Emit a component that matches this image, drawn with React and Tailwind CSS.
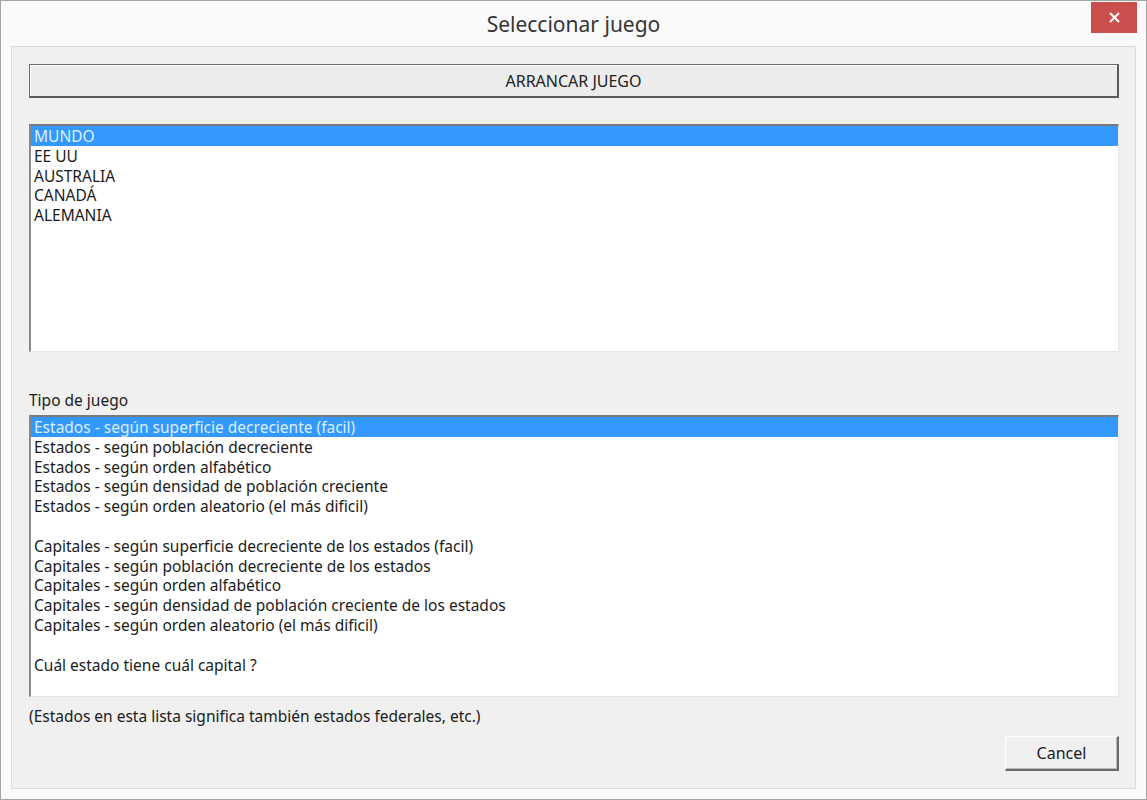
import React from "react";

const countries = ["MUNDO", "EE UU", "AUSTRALIA", "CANADÁ", "ALEMANIA"];
const types = [
  "Estados - según superficie decreciente (facil)",
  "Estados - según población decreciente",
  "Estados - según orden alfabético",
  "Estados - según densidad de población creciente",
  "Estados - según orden aleatorio (el más dificil)",
  "",
  "Capitales - según superficie decreciente de los estados (facil)",
  "Capitales - según población decreciente de los estados",
  "Capitales - según orden alfabético",
  "Capitales - según densidad de población creciente de los estados",
  "Capitales - según orden aleatorio (el más dificil)",
  "",
  "Cuál estado tiene cuál capital ?",
];

function ListBox({ items, height }) {
  return (
    <div
      className={`bg-white border-t-2 border-l-2 border-b border-r border-t-[#7a7a7a] border-l-[#8a8a8a] border-b-[#e6e6e6] border-r-[#e6e6e6] ${height}`}
    >
      {items.map((t, i) => (
        <div
          key={i}
          className={`h-[19.8px] leading-[21.8px] pl-[3px] text-[15.5px] whitespace-pre ${
            i === 0 ? "bg-[#3399ff] text-[#dcefff]" : "text-[#1b1b1b]"
          }`}
        >
          {t || " "}
        </div>
      ))}
    </div>
  );
}

export default function App() {
  return (
    <div
      className="w-[1147px] h-[800px] border border-[#a4a4a4] bg-[#fafafa] flex flex-col"
      style={{ fontFamily: '"Noto Sans", "Liberation Sans", sans-serif' }}
    >
      <div className="relative h-[45px] shrink-0 flex items-center justify-center">
        <span className="text-[21px] text-[#353535] mt-[2px]">Seleccionar juego</span>
        <div className="absolute right-[9px] top-[1px] w-[46px] h-[31px] bg-[#c9504c] flex items-center justify-center">
          <svg width="11" height="11" viewBox="0 0 11 11">
            <path d="M1 1 L10 10 M10 1 L1 10" stroke="#fff" strokeWidth="2" />
          </svg>
        </div>
      </div>
      <div className="mx-[10px] mb-[10px] flex-1 border border-[#dadada] bg-[#f0f0f0] pl-[17px] pr-[16px] pt-[17px] flex flex-col">
        <button className="h-[34px] w-full border border-[#6c6c6c] border-b-2 border-r-2 border-b-[#5a5a5a] border-r-[#5a5a5a] bg-[#ececec] text-[16px] text-[#222] shadow-[inset_1px_1px_0_#ffffff]">
          ARRANCAR JUEGO
        </button>
        <div className="mt-[26px]">
          <ListBox items={countries} height="h-[228px]" />
        </div>
        <div className="mt-[38px] h-[20px] leading-[21px] text-[15.5px] text-[#1b1b1b]">Tipo de juego</div>
        <div className="mt-[5px]">
          <ListBox items={types} height="h-[282px]" />
        </div>
        <div className="mt-[9px] h-[20px] leading-[21px] text-[15.5px] text-[#1b1b1b]">
          (Estados en esta lista significa también estados federales, etc.)
        </div>
        <div className="mt-[10px] flex justify-end">
          <button className="w-[114px] h-[35px] border-t border-l border-b-2 border-r-2 border-t-[#ffffff] border-l-[#ffffff] border-b-[#6a6a6a] border-r-[#6a6a6a] bg-[#f0f0f0] text-[16px] text-[#1b1b1b] shadow-[inset_-1px_-1px_0_#b8b8b8]">
            Cancel
          </button>
        </div>
      </div>
    </div>
  );
}
